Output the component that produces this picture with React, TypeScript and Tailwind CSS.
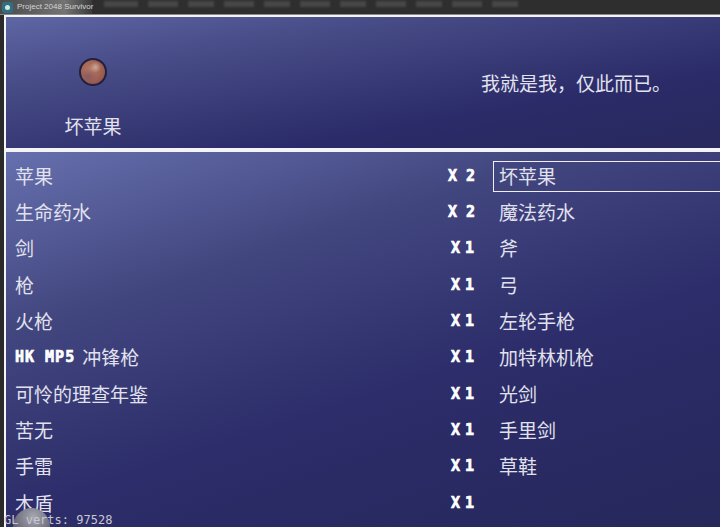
const cjk = "font-['Noto_Sans_CJK_SC','Noto_Sans',sans-serif]";

const rows = [
  { left: "苹果", count: "X 2", right: "坏苹果" },
  { left: "生命药水", count: "X 2", right: "魔法药水" },
  { left: "剑", count: "X 1", right: "斧" },
  { left: "枪", count: "X 1", right: "弓" },
  { left: "火枪", count: "X 1", right: "左轮手枪" },
  { left: "冲锋枪", tag: "HK MP5", count: "X 1", right: "加特林机枪" },
  { left: "可怜的理查年鉴", count: "X 1", right: "光剑" },
  { left: "苦无", count: "X 1", right: "手里剑" },
  { left: "手雷", count: "X 1", right: "草鞋" },
  { left: "木盾", count: "X 1", right: "" },
];

const smudges = [34, 30, 26, 30, 26, 30, 26, 30, 26, 30, 26];

const App = () => {
  return (
    <div className={`relative w-[720px] h-[527px] overflow-hidden bg-[#2a2a2a] flex flex-col ${cjk}`}>
      <div className="h-[15px] shrink-0 flex items-start bg-[#2e2e2e] border-b border-[#8a8a8a]">
        <div className="w-[92px] h-[14px] shrink-0 flex items-center gap-[4px] pl-[2px] bg-[linear-gradient(90deg,#4a4a4a,#747474_70%,#3a3a3a)]">
          <div className="w-[11px] h-[11px] shrink-0 rounded-[2px] bg-[#2f6f80] flex items-center justify-center">
            <div className="w-[5px] h-[5px] rounded-full bg-[#d8e4ea]" />
          </div>
          <span className="font-['Liberation_Sans',sans-serif] text-[8px] leading-none whitespace-nowrap text-[#d4d4d4]">
            Project 2048 Survivor
          </span>
        </div>
        <div className="flex gap-[10px] pl-[12px] pt-[1px]">
          {smudges.map((w, i) => (
            <div key={i} className="h-[6px] bg-[#474747] blur-[1px]" style={{ width: w }} />
          ))}
        </div>
      </div>

      <div className="flex-1 flex flex-col pl-[4px]">
        <div className="h-[137px] shrink-0 border-t-[2px] border-l-[2px] border-b-[4px] border-[#f4f4f6] flex bg-[linear-gradient(170deg,#5e66a4_0%,#454984_30%,#2a2b68_70%,#29295e_100%)]">
          <div className="w-[174px] flex flex-col items-center pt-[41px]">
            <div className="w-[28px] h-[28px] rounded-full border-[2px] border-[#231f3e] bg-[radial-gradient(circle_at_60%_30%,#c9a89c_0%,transparent_25%),radial-gradient(circle_at_30%_70%,#8a5a62_0%,transparent_35%),radial-gradient(circle_at_40%_40%,#b87a64_0%,#9c5f50_60%,#74464c_100%)]" />
            <div className="mt-[26px] text-[19px] leading-[28px] text-[#e2e2ee]">坏苹果</div>
          </div>
          <div className="flex-1 pl-[301px] pt-[52px] text-[19px] leading-[28px] text-[#e2e2ee] whitespace-nowrap">
            我就是我，仅此而已。
          </div>
        </div>

        <div className="flex-1 border-l-[2px] border-[#f4f4f6] pt-[6px] bg-[linear-gradient(162deg,#6670ae_0%,#42467f_30%,#2c2d6a_60%,#26275a_100%)]">
          {rows.map((row, i) => (
            <div key={i} className="h-[36.3px] flex items-center text-[19px] text-[#e2e2ee]">
              <div className="w-[442px] shrink-0 pl-[9px] flex items-center gap-[7px] whitespace-nowrap">
                {row.tag && (
                  <span className="font-['DejaVu_Sans_Mono',monospace] font-bold text-[15px] tracking-[1px] [-webkit-text-stroke:0.7px_white] text-white">
                    {row.tag}
                  </span>
                )}
                <span>{row.left}</span>
              </div>
              <div
                className={
                  row.count === "X 2"
                    ? "w-[45px] shrink-0 pr-[19px] text-right font-['DejaVu_Sans_Mono',monospace] font-bold text-[15px] whitespace-pre [-webkit-text-stroke:0.7px_white] text-white"
                    : "w-[45px] shrink-0 pr-[21px] text-right font-['DejaVu_Sans_Mono',monospace] font-bold text-[15px] tracking-[-2px] whitespace-pre [-webkit-text-stroke:0.7px_white] text-white"
                }
              >
                {row.count}
              </div>
              {i === 0 ? (
                <div className="flex-1 h-[31px] border border-r-0 border-[#eeeef4] pl-[5px] flex items-center">
                  {row.right}
                </div>
              ) : (
                <div className="flex-1 pl-[6px]">{row.right}</div>
              )}
            </div>
          ))}
        </div>
      </div>

      <div className="absolute left-[13px] top-[508px] w-[37px] h-[37px] rounded-full bg-[radial-gradient(circle_at_55%_25%,#a8a8b2,#5a5a6e_70%)]" />
      <div className="absolute left-[4px] top-[513px] h-[14px] font-['DejaVu_Sans_Mono',monospace] text-[12px] leading-[14px] text-[#c8c8d0] whitespace-pre">
        GL verts: 97528
      </div>
    </div>
  );
};

export default App;
